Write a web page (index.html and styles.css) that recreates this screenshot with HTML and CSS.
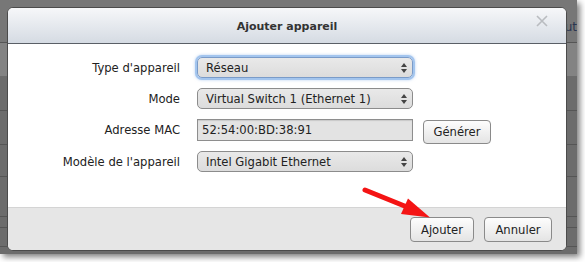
FILE: index.html
```html
<!DOCTYPE html>
<html lang="fr">
<head>
    <meta charset="UTF-8">
    <title>Ajouter appareil</title>
    <link rel="stylesheet" href="styles.css">
</head>
<body>
    <div class="screen">
        <!-- Dimmed application behind the modal -->
        <div class="backdrop">
            <div class="bg-row bg-top"><span class="bg-text">Ajout</span></div>
            <div class="bg-row bg-band"></div>
            <div class="bg-row bg-r1"></div>
            <div class="bg-row bg-r2"></div>
            <div class="bg-row bg-r3"></div>
            <div class="bg-row bg-r4"></div>
            <div class="bg-row bg-r5"></div>
            <div class="bg-row bg-r6"></div>
        </div>

        <!-- Modal -->
        <div class="dialog">
            <div class="dialog-header">
                <h1>Ajouter appareil</h1>
                <svg class="close" width="12" height="12" viewBox="0 0 12 12">
                    <path d="M1 1 L11 11 M11 1 L1 11" stroke="#b9bcc0" stroke-width="1.6" fill="none"/>
                </svg>
            </div>

            <div class="dialog-body">
                <div class="form-grid">
                    <label>Type d'appareil</label>
                    <div class="select focused"><span>Réseau</span><i class="arrows"></i></div>
                    <div></div>

                    <label>Mode</label>
                    <div class="select"><span>Virtual Switch 1 (Ethernet 1)</span><i class="arrows"></i></div>
                    <div></div>

                    <label>Adresse MAC</label>
                    <input class="text-input" type="text" value="52:54:00:BD:38:91" readonly>
                    <button class="btn btn-gen">Générer</button>

                    <label>Modèle de l'appareil</label>
                    <div class="select"><span>Intel Gigabit Ethernet</span><i class="arrows"></i></div>
                    <div></div>
                </div>
            </div>

            <div class="dialog-footer">
                <button class="btn btn-add">Ajouter</button>
                <button class="btn btn-cancel">Annuler</button>
            </div>
        </div>

        <!-- Red annotation arrow -->
        <svg class="arrow" width="585" height="262" viewBox="0 0 585 262">
            <line x1="365" y1="190" x2="407" y2="207" stroke="#f41414" stroke-width="5" stroke-linecap="round"/>
            <polygon points="408,198.5 401,214 430,217.5" fill="#f41414"/>
        </svg>
    </div>
</body>
</html>
```

FILE: styles.css
```css
html, body {
    margin: 0;
    min-height: 262px;
    background-color: #ffffff;
}
body {
    font-family: "DejaVu Sans", Verdana, sans-serif;
    font-size: 11px;
    color: #222;
}
.screen {
    position: relative;
    width: 577px;
    height: 254px;
    background-color: #6c6c6c;
    box-shadow: 3px 3px 6px rgba(0, 0, 0, 0.5);
}

/* background app, dimmed */
.backdrop {
    display: flex;
    flex-direction: column;
    height: 100%;
    overflow: hidden;
}
.bg-row {
    border-bottom: 1px solid #555;
}
.bg-top {
    height: 42px;
    background-color: #777;
    position: relative;
}
.bg-text {
    position: absolute;
    right: 0;
    top: 20px;
    color: #2b3550;
    font-size: 12px;
}
.bg-band {
    height: 33px;
    background-color: #838383;
    border-bottom: none;
}
.bg-r1 { height: 34px; }
.bg-r2 { height: 33px; }
.bg-r3 { height: 31px; }
.bg-r4 { height: 39px; }
.bg-r5 { height: 10px; }
.bg-r6 { height: 18px; }

/* dialog */
.dialog {
    position: absolute;
    left: 7px;
    top: 7px;
    width: 558px;
    height: 242px;
    border: 1px solid #4b4b4b;
    border-radius: 6px;
    background-color: #fff;
    overflow: hidden;
    display: flex;
    flex-direction: column;
}
.dialog-header {
    height: 35px;
    border-bottom: 1px solid #5a5f66;
    background: linear-gradient(to bottom, #f6f7f9, #d5dbe3);
    display: flex;
    align-items: center;
    justify-content: center;
    position: relative;
}
.dialog-header h1 {
    margin: 0;
    font-size: 11px;
    font-weight: bold;
    color: #333;
    padding-top: 2px;
}
.close {
    position: absolute;
    right: 18px;
    top: 7px;
}
.dialog-body {
    flex-grow: 1;
    padding-top: 13px;
}
.form-grid {
    display: grid;
    grid-template-columns: 172px 216px auto;
    grid-template-rows: 21px 21px 22px 21px;
    column-gap: 17px;
    row-gap: 10px;
    align-items: center;
}
.form-grid label {
    text-align: right;
    font-size: 11.6px;
    color: #222;
}
.select {
    height: 19px;
    border: 1px solid #8c8c8c;
    border-radius: 5px;
    background: linear-gradient(to bottom, #e9e9e9, #dcdcdc);
    display: flex;
    align-items: center;
    justify-content: space-between;
    padding: 0 5px 0 8px;
    font-size: 11.6px;
    color: #222;
}
.select.focused {
    border-color: #7a9bc8;
    box-shadow: 0 0 0 2px #a3c5ee, 0 0 3px 2px rgba(110, 160, 230, 0.5);
}
.arrows {
    width: 6px;
    height: 10px;
    position: relative;
}
.arrows::before,
.arrows::after {
    content: "";
    position: absolute;
    left: 0;
    border-left: 3px solid transparent;
    border-right: 3px solid transparent;
}
.arrows::before {
    top: 0;
    border-bottom: 4px solid #444;
}
.arrows::after {
    bottom: 0;
    border-top: 4px solid #444;
}
.text-input {
    box-sizing: border-box;
    width: 216px;
    height: 22px;
    margin: 0;
    border: 1px solid #8e8e8e;
    background-color: #e3e3e3;
    box-shadow: inset 0 1px 1px rgba(0, 0, 0, 0.12);
    font-family: "DejaVu Sans", Verdana, sans-serif;
    font-size: 11.6px;
    color: #222;
    padding: 0 4px;
}
.btn {
    height: 25px;
    border: 1px solid #8a8a8a;
    border-radius: 4px;
    background: linear-gradient(to bottom, #fdfdfd, #e4e4e4);
    font-family: "DejaVu Sans", Verdana, sans-serif;
    font-size: 11.6px;
    color: #222;
    padding: 0;
}
.btn-gen {
    width: 68px;
    height: 24px;
    margin-left: -7px;
    margin-top: 3px;
}
.dialog-footer {
    height: 43px;
    border-top: 1px solid #d4d4d4;
    background-color: #e6e6e6;
    display: flex;
    justify-content: flex-end;
    align-items: flex-start;
    gap: 10px;
    padding: 9px 14px 0 0;
    box-sizing: border-box;
}
.btn-add {
    width: 64px;
}
.btn-cancel {
    width: 68px;
}
.arrow {
    position: absolute;
    left: 0;
    top: 0;
    pointer-events: none;
}
```
